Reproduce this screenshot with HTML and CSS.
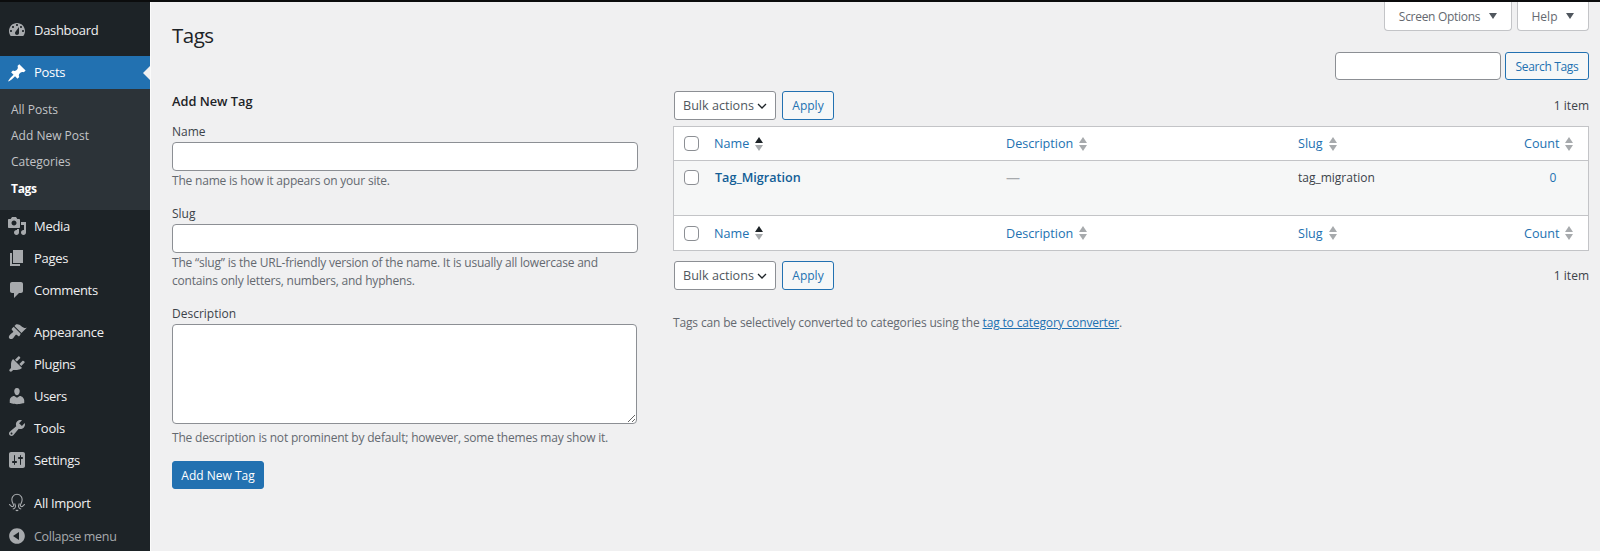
FILE: index.html
```html
<!DOCTYPE html>
<html lang="en">
<head>
<meta charset="utf-8">
<title>Tags</title>
<link rel="stylesheet" href="styles.css">
</head>
<body>
<div class="topline"></div>
<div class="shell">
  <nav class="side">
    <ul class="menu first">
      <li class="item"><svg class="ico" viewBox="0 0 20 20"><path d="M3.76 16h12.48c1.1-1.37 1.76-3.11 1.76-5 0-4.420-3.58-8-8-8s-8 3.58-8 8c0 1.890.66 3.630 1.760 5zM10 4c.55 0 1 .45 1 1s-.45 1-1 1-1-.45-1-1 .45-1 1-1zM6 6c.55 0 1 .45 1 1s-.45 1-1 1-1-.45-1-1 .45-1 1-1zm8 0c.55 0 1 .45 1 1s-.45 1-1 1-1-.45-1-1 .45-1 1-1zm-5.370 5.550L12 7v6c0 1.100-.9 2-2 2s-2-.9-2-2c0-.57.250-1.080.630-1.450zM4 10c.55 0 1 .45 1 1s-.45 1-1 1-1-.45-1-1 .45-1 1-1zm12 0c.55 0 1 .45 1 1s-.45 1-1 1-1-.45-1-1 .45-1 1-1z"/></svg><span>Dashboard</span></li>
    </ul>
    <ul class="menu">
      <li class="item current"><svg class="ico" viewBox="0 0 20 20"><path d="M10.44 3.02l1.82-1.82 6.36 6.35-1.83 1.82c-1.05-.68-2.48-.57-3.41.36l-.75.75c-.92.93-1.04 2.35-.35 3.41l-1.83 1.82-2.41-2.41-2.8 2.79c-.42.42-3.38 2.71-3.8 2.29s1.86-3.39 2.28-3.81l2.79-2.79L4.1 9.36l1.83-1.82c1.05.69 2.48.57 3.4-.36l.75-.75c.93-.92 1.05-2.35.36-3.41z"/></svg><span>Posts</span></li>
      <li class="sub">
        <a class="subitem">All Posts</a>
        <a class="subitem">Add New Post</a>
        <a class="subitem">Categories</a>
        <a class="subitem active">Tags</a>
      </li>
      <li class="item"><svg class="ico" viewBox="0 0 20 20"><path d="M13 11V4c0-.55-.45-1-1-1h-1.670L9 1H5L3.670 3H2c-.55 0-1 .45-1 1v7c0 .55.45 1 1 1h10c.55 0 1-.45 1-1zM7 4.500c1.380 0 2.500 1.120 2.500 2.500S8.380 9.500 7 9.500 4.500 8.380 4.500 7 5.620 4.500 7 4.500zM14 6h5v10.500c0 1.380-1.120 2.500-2.500 2.500S14 17.880 14 16.500s1.120-2.500 2.500-2.500c.17 0 .34.020.5.050V9h-3V6zm-4 8.050V13h2v3.500c0 1.380-1.120 2.500-2.500 2.500S7 17.880 7 16.500 8.120 14 9.500 14c.17 0 .34.020.5.050z"/></svg><span>Media</span></li>
      <li class="item"><svg class="ico" viewBox="0 0 20 20"><path d="M6 15V2h10v13H6zm-1 1h8v2H3V5h2v11z"/></svg><span>Pages</span></li>
      <li class="item"><svg class="ico" viewBox="0 0 20 20"><path d="M5 2h9c1.100 0 2 .9 2 2v7c0 1.100-.9 2-2 2h-2l-5 5v-5H5c-1.100 0-2-.9-2-2V4c0-1.100.9-2 2-2z"/></svg><span>Comments</span></li>
    </ul>
    <ul class="menu settings-group">
      <li class="item"><svg class="ico" viewBox="0 0 20 20"><path d="M14.480 11.060L7.410 3.990l1.500-1.500c.5-.56 2.300-.47 3.510.32 1.210.8 1.430 1.280 2.910 2.100 1.180.64 2.450 1.260 4.450.85zm-.71.71L6.700 4.700 4.930 6.470c-.39.39-.39 1.020 0 1.410l1.060 1.060c.39.39.39 1.030 0 1.420-.6.6-1.430 1.110-2.210 1.690-.35.26-.7.53-1.010.84-1.150 1.150-1.200 2.700-.3 3.600s2.450.85 3.600-.3c.31-.31.58-.66.84-1.010.58-.78 1.090-1.610 1.690-2.210.39-.39 1.030-.39 1.420 0l1.060 1.060c.39.39 1.020.39 1.410 0z"/></svg><span>Appearance</span></li>
      <li class="item"><svg class="ico" viewBox="0 0 20 20"><path d="M13.110 4.360L9.870 7.600 8 5.730l3.240-3.240c.35-.34 1.050-.2 1.560.32.52.51.66 1.210.31 1.550zm-8 1.770l.91-1.120 9.010 9.010-1.190.84c-.71.71-2.630 1.160-3.820 1.160H6.140L4.900 17.260c-.59.59-1.540.59-2.120 0-.59-.58-.59-1.530 0-2.120l1.240-1.240v-3.880c0-1.130.4-3.190 1.090-3.890zm7.260 3.970l3.240-3.240c.34-.35 1.040-.21 1.550.31.52.51.66 1.210.31 1.560l-3.240 3.250z"/></svg><span>Plugins</span></li>
      <li class="item"><svg class="ico" viewBox="0 0 20 20"><path d="M10 9.250c-2.270 0-2.730-3.440-2.730-3.440C7 4.020 7.820 2 9.970 2c2.160 0 2.980 2.020 2.710 3.810 0 0-.41 3.440-2.680 3.440zm0 2.570L12.720 10c2.390 0 4.520 2.330 4.520 4.530v2.490s-3.650 1.130-7.240 1.130c-3.650 0-7.240-1.130-7.240-1.130v-2.490c0-2.250 1.940-4.480 4.470-4.480z"/></svg><span>Users</span></li>
      <li class="item"><svg class="ico" viewBox="0 0 20 20"><path d="M16.680 9.770c-1.340 1.340-3.300 1.670-4.950.99l-5.410 6.520c-.99.99-2.590.99-3.580 0s-.99-2.590 0-3.570l6.520-5.420c-.68-1.650-.35-3.610.99-4.950 1.280-1.280 3.120-1.620 4.720-1.060l-2.890 2.890 2.820 2.820 2.860-2.870c.53 1.580.18 3.390-1.080 4.650zM3.810 16.210c.4.39 1.040.39 1.430 0 .4-.4.4-1.040 0-1.430-.39-.4-1.030-.4-1.430 0-.39.39-.39 1.030 0 1.430z"/></svg><span>Tools</span></li>
      <li class="item"><svg class="ico" viewBox="0 0 20 20"><path fill-rule="evenodd" d="M18 16V4c0-1.100-.9-2-2-2H4c-1.100 0-2 .9-2 2v12c0 1.100.9 2 2 2h12c1.100 0 2-.9 2-2zM8 11h1c.55 0 1 .45 1 1s-.45 1-1 1H8v1.500c0 .28-.22.5-.5.5s-.5-.22-.5-.5V13H6c-.55 0-1-.45-1-1s.45-1 1-1h1V5.500c0-.28.22-.5.5-.5s.5.22.5.5V11zm5-2h-1c-.55 0-1-.45-1-1s.45-1 1-1h1V5.500c0-.28.22-.5.5-.5s.5.22.5.5V7h1c.55 0 1 .45 1 1s-.45 1-1 1h-1v5.500c0 .28-.22.5-.5.5s-.5-.22-.5-.5V9z"/></svg><span>Settings</span></li>
    </ul>
    <ul class="menu">
      <li class="item"><svg class="ico outline" viewBox="0 0 20 20"><path d="M5.600 9.800C3.600 5 6.200 1.300 10 1.300s6.400 3.700 4.400 8.500c-.6 1.500-1.300 2.200-1 3 .3.900 1.500 1 2.300.4.800-.6 1-1.600 2.300-1.700M5.600 9.800c.6 1.500 1.300 2.200 1 3-.3.900-1.500 1-2.300.4-.8-.6-1-1.600-2.300-1.700M7.600 10.500c.5 1.300 1.100 2 .8 3.300-.3 1.200-1.200 2-2.600 2.200M12.400 10.500c-.5 1.300-1.100 2-.8 3.300.3 1.200 1.200 2 2.600 2.200M8.800 16.800c.4.500.8.800 1.200.8s.8-.3 1.200-.8"/></svg><span>All Import</span></li>
      <li class="item collapse"><svg class="ico" viewBox="0 0 20 20"><path fill-rule="evenodd" d="M10 2.160c4.330 0 7.840 3.510 7.840 7.840s-3.510 7.840-7.840 7.840S2.160 14.330 2.160 10 5.710 2.160 10 2.160zM12 14V6l-6 4z"/></svg><span>Collapse menu</span></li>
    </ul>
  </nav>
  <main class="main">
    <div class="tabs">
      <button class="tab tab-screen" type="button">Screen Options<i class="caret"></i></button>
      <button class="tab tab-help" type="button">Help<i class="caret"></i></button>
    </div>
    <h1 class="title">Tags</h1>
    <div class="search">
      <input class="field search-field" type="text" aria-label="Search Tags">
      <button class="btn btn-light" type="button">Search Tags</button>
    </div>
    <div class="columns">
      <form class="form">
        <h2 class="form-title">Add New Tag</h2>
        <div class="group">
          <label class="label">Name</label>
          <input class="field wide" type="text">
          <p class="hint">The name is how it appears on your site.</p>
        </div>
        <div class="group">
          <label class="label">Slug</label>
          <input class="field wide" type="text">
          <p class="hint">The “slug” is the URL-friendly version of the name. It is usually all lowercase and contains only letters, numbers, and hyphens.</p>
        </div>
        <div class="group group-last">
          <label class="label">Description</label>
          <textarea class="field area"></textarea>
          <p class="hint">The description is not prominent by default; however, some themes may show it.</p>
        </div>
        <button class="btn btn-primary" type="button">Add New Tag</button>
      </form>
      <section class="list">
        <div class="tablenav">
          <select class="select"><option>Bulk actions</option></select>
          <button class="btn btn-apply" type="button">Apply</button>
          <span class="count-label">1 item</span>
        </div>
        <table class="table">
          <colgroup><col class="c-cb"><col class="c-name"><col class="c-name"><col class="c-slug"><col></colgroup>
          <thead>
            <tr>
              <th><input class="check" type="checkbox"></th>
              <th><a class="sortable">Name<span class="sort on"><i></i><i></i></span></a></th>
              <th><a class="sortable">Description<span class="sort"><i></i><i></i></span></a></th>
              <th><a class="sortable">Slug<span class="sort"><i></i><i></i></span></a></th>
              <th><a class="sortable">Count<span class="sort"><i></i><i></i></span></a></th>
            </tr>
          </thead>
          <tbody>
            <tr>
              <td><input class="check" type="checkbox"></td>
              <td><a class="row-title">Tag_Migration</a></td>
              <td><span class="dash">—</span></td>
              <td class="slug">tag_migration</td>
              <td class="num"><a class="num-link">0</a></td>
            </tr>
          </tbody>
          <tfoot>
            <tr>
              <th><input class="check" type="checkbox"></th>
              <th><a class="sortable">Name<span class="sort on"><i></i><i></i></span></a></th>
              <th><a class="sortable">Description<span class="sort"><i></i><i></i></span></a></th>
              <th><a class="sortable">Slug<span class="sort"><i></i><i></i></span></a></th>
              <th><a class="sortable">Count<span class="sort"><i></i><i></i></span></a></th>
            </tr>
          </tfoot>
        </table>
        <div class="tablenav lower">
          <select class="select"><option>Bulk actions</option></select>
          <button class="btn btn-apply" type="button">Apply</button>
          <span class="count-label">1 item</span>
        </div>
        <p class="note">Tags can be selectively converted to categories using the <a class="note-link">tag to category converter</a>.</p>
      </section>
    </div>
  </main>
</div>
</body>
</html>
```
FILE: styles.css
```css
* { box-sizing: border-box; }
html, body { margin: 0; height: 551px; overflow: hidden; }
body {
  background: #f0f0f1;
  color: #3c434a;
  font-family: "Open Sans", "Noto Sans", sans-serif;
  font-size: 12px;
  line-height: 19px;
}
.topline { height: 2px; background: #0b0c0d; }
.shell { display: flex; height: 549px; }

/* sidebar */
.side {
  width: 151px;
  flex: none;
  background: #1d2327;
  border-right: 1px solid #fbfbfb;
  padding-top: 12px;
  color: #f0f0f1;
}
.menu { list-style: none; margin: 0 0 10px; padding: 0; }
.settings-group { margin-bottom: 11px; }
.item {
  display: flex;
  align-items: center;
  height: 32px;
  padding-left: 7px;
  gap: 7px;
  font-size: 13px;
  letter-spacing: -.3px;
  position: relative;
}
.ico { width: 20px; height: 20px; flex: none; fill: #a7aaad; }
.ico.outline { fill: none; stroke: #a7aaad; stroke-width: 1.1; }
.current { background: #2271b1; color: #fff; height: 33px; }
.current .ico { fill: #fff; }
.current::after {
  content: "";
  position: absolute;
  right: 0;
  top: 10px;
  border: 7px solid transparent;
  border-left-width: 0;
  border-right: 7px solid #f0f0f1;
}
.sub {
  background: #2c3338;
  padding: 7.500px 0 6px 11px;
  height: 121px;
}
.subitem {
  display: block;
  height: 26.400px;
  line-height: 26px;
  color: #c3c4c7;
}
.subitem.active { color: #fff; font-weight: 700; letter-spacing: -.3px; }
.collapse { color: #a7aaad; font-size: 12.500px; margin-top: 1px; }

/* main */
.main { flex: 1; min-width: 0; padding: 0 11px 0 21px; }
.tabs { display: flex; justify-content: flex-end; gap: 5px; height: 0; }
.tab {
  height: 29px;
  padding: 0;
  background: #fff;
  border: 1px solid #c3c4c7;
  border-top: 0;
  border-radius: 0 0 4px 4px;
  color: #646970;
  font: inherit;
  display: flex;
  align-items: center;
  justify-content: center;
}
.tab-screen { width: 128px; letter-spacing: -.3px; }
.tab-help { width: 72px; }
.caret {
  width: 0; height: 0;
  margin-left: 9px;
  border: 4px solid transparent;
  border-bottom: 0;
  border-top: 6px solid #50575e;
}
.title {
  margin: 0;
  padding-top: 18px;
  font-size: 20.500px;
  line-height: 30px;
  font-weight: 400;
  letter-spacing: -.5px;
  color: #1d2327;
  height: 50px;
}
.search { display: flex; justify-content: flex-end; gap: 4px; height: 28px; }
.field {
  background: #fff;
  border: 1px solid #8c8f94;
  border-radius: 4px;
  font: inherit;
  display: block;
}
.search-field { width: 166px; height: 28px; }
.btn {
  font: inherit;
  border-radius: 3px;
  height: 28px;
  padding: 0 10px;
}
.btn-light { width: 84px; padding: 0; background: #f6f7f7; border: 1px solid #2271b1; color: #2271b1; letter-spacing: -.35px; }
.btn-apply { width: 52px; height: 29px; padding: 0; background: #f6f7f7; border: 1px solid #2271b1; color: #2271b1; }
.btn-primary { width: 92px; padding: 0; background: #2271b1; border: 1px solid #2271b1; color: #fff; }

.columns { display: flex; gap: 35px; padding-top: 10px; }
.form { width: 466px; flex: none; }
.form-title { margin: 0; padding-top: 2px; font-size: 12.800px; line-height: 19px; font-weight: 600; color: #1d2327; height: 31px; }
.group { margin-bottom: 14.500px; }
.group-last { margin-bottom: 13.500px; }
.label { display: block; height: 19px; line-height: 18px; margin-top: 2px; }
.wide { width: 466px; height: 29px; }
.area { width: 465px; height: 100px; resize: vertical; margin-bottom: 5px; }
.hint { margin: 1px 0 0; color: #646970; line-height: 18.400px; letter-spacing: -.2px; }

.list { flex: 1; min-width: 0; padding-top: 1px; }
.tablenav { display: flex; align-items: center; gap: 6px; height: 29px; margin-bottom: 6px; padding-left: 1px; }
.tablenav.lower { margin: 10px 0 0; }
.select {
  appearance: none;
  width: 102px;
  height: 29px;
  padding: 0 0 0 8px;
  background: #fff url("data:image/svg+xml,%3Csvg xmlns='http://www.w3.org/2000/svg' viewBox='0 0 10 6'%3E%3Cpath d='M1 1l4 4 4-4' fill='none' stroke='%231d2327' stroke-width='1.300'/%3E%3C/svg%3E") no-repeat right 8px center / 10px 6px;
  border: 1px solid #8c8f94;
  border-radius: 3px;
  color: #50575e;
  font: inherit;
  font-size: 12.600px;
}
.count-label { margin-left: auto; }
.table {
  width: 100%;
  table-layout: fixed;
  border-collapse: separate;
  border-spacing: 0;
  background: #fff;
  border: 1px solid #c3c4c7;
}
.c-cb { width: 32px; }
.c-name { width: 292px; }
.c-slug { width: 226px; }
.table th, .table td { padding: 0 8px; text-align: left; font-weight: 400; vertical-align: middle; }
.table th:first-child, .table td:first-child { padding: 0 0 0 10px; }
thead th { height: 34px; border-bottom: 1px solid #c3c4c7; }
tfoot th { height: 35px; border-top: 1px solid #c3c4c7; }
tbody tr { background: #f6f7f7; }
.table td { height: 54px; vertical-align: top; padding-top: 7px; }
.table td:first-child { padding-top: 9px; }
.check {
  appearance: none;
  display: block;
  margin: 0;
  width: 15px;
  height: 15px;
  background: #fff;
  border: 1px solid #8c8f94;
  border-radius: 4px;
}
.sortable { color: #2271b1; display: inline-flex; align-items: center; font-size: 12.600px; }
.sort { display: inline-flex; flex-direction: column; gap: 2px; margin-left: 6px; }
.sort i { width: 0; height: 0; border: 4px solid transparent; }
.sort i:first-child { border-top: 0; border-bottom: 6px solid #a7aaad; }
.sort i:last-child { border-bottom: 0; border-top: 6px solid #a7aaad; }
.sort.on i:first-child { border-bottom-color: #1d2327; }
.row-title { color: #135e96; font-weight: 600; margin-left: 1px; font-size: 12.600px; }
.dash { color: #a7aaad; font-size: 14px; }
.slug { padding-left: 9px; }
.num { text-align: center; }
.table td.num { text-align: center; padding: 7px 0 0 2px; }
.num-link { color: #2271b1; }
.note { margin: 23px 0 0; color: #646970; letter-spacing: -.15px; }
.note-link { color: #2271b1; text-decoration: underline; }
```
